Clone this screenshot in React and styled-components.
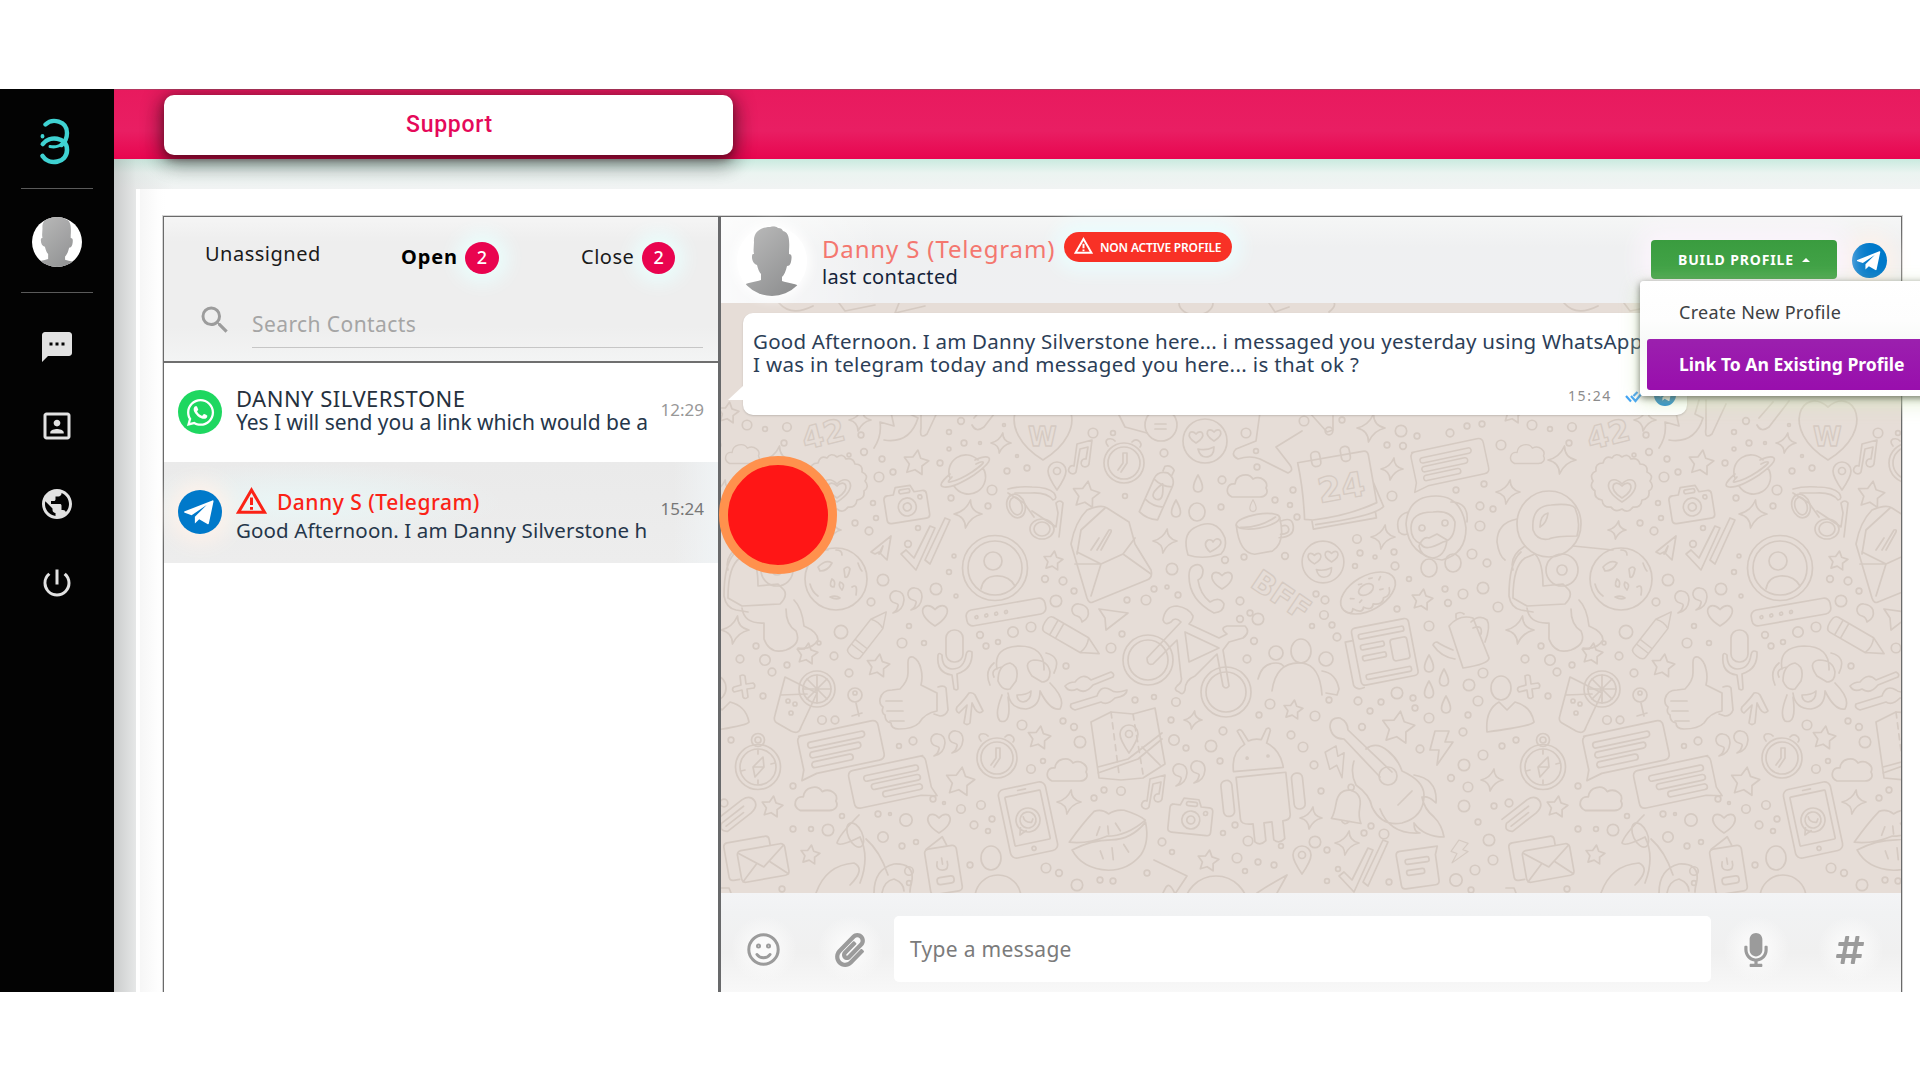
import React from "react";
import styled, { createGlobalStyle, css } from "styled-components";
import { MdSms, MdPortrait, MdPublic, MdPowerSettingsNew, MdSearch } from "react-icons/md";
import { FaWhatsapp, FaPaperclip, FaMicrophone, FaHashtag } from "react-icons/fa";

const Global = createGlobalStyle`
  * { box-sizing: border-box; }
  body { margin: 0; background: #fff; overflow: hidden; }
`;

const Page = styled.div`
  width: 1920px; height: 1080px; padding-top: 89px; overflow: hidden; background: #fff;
  font-family: "Noto Sans", "DejaVu Sans", sans-serif; color: #1f2d3d;
`;
const Frame = styled.div`display: flex; height: 903px; overflow: hidden;`;

/* Sidebar */
const Sidebar = styled.nav`
  width: 114px; flex: none; background: #030303; display: flex; flex-direction: column; align-items: center;
  color: #e2e2e2; padding-top: 28px; position: relative; z-index: 3;
`;
const LogoSlot = styled.div`height: 50px; width: 34px; margin-right: 5px; margin-bottom: 21px; svg { display: block; }`;
const Rule = styled.div`width: 72px; height: 1px; background: #5a5a5a; flex: none;`;
const SideAvatar = styled.div`margin: 28px 0 25px; width: 50px; height: 50px; border-radius: 50%; overflow: hidden; background: #fff; svg { display: block; }`;
const SideNav = styled.div`
  padding-top: 36px; display: flex; flex-direction: column; gap: 42.5px;
  svg { display: block; width: 36px; height: 36px; }
`;

/* Main */
const Main = styled.div`flex: 1; min-width: 0; display: flex; flex-direction: column;`;
const TopBar = styled.header`
  height: 70px; flex: none; padding: 6px 0 0 50px; position: relative; z-index: 2;
  background: linear-gradient(#e81a5e 0, #e91e63 60%, #e8054f 100%);
  box-shadow: inset 0 1px 0 rgba(120,90,100,.45);
`;
const TopTab = styled.div`
  width: 569px; height: 60px; border-radius: 10px; background: #fff; color: #e5095a; padding-left: 2px;
  font: 500 23px/59px Roboto, "Liberation Sans", sans-serif; letter-spacing: .72px; text-align: center;
  box-shadow: 0 4px 7px rgba(70,0,15,.4), 0 4px 20px 3px rgba(20,10,15,.48), 0 12px 20px rgba(30,30,30,.16);
`;
const Content = styled.div`
  flex: 1; min-height: 0; padding: 30px 0 0 22px;
  background: linear-gradient(90deg, rgba(150,150,150,.42) 0, rgba(190,190,190,.22) 22px, rgba(200,200,200,0) 60px),
    linear-gradient(#c9eadf 0, #ebf4f1 14px, #f1f3f3 30px);
`;
const Panel = styled.div`
  height: 100%; padding: 27px 18px 0 27px;
  background: linear-gradient(90deg, #fff 0, #fff 4px, #f6f6f6 4px, #fefefe 22px, #fff 30px);
`;
const Workspace = styled.div`
  height: 100%; display: flex; position: relative;
  border: 1px solid #6a6a6a; border-bottom: 0; box-shadow: 0 0 0 1px rgba(120,120,120,.3);
`;

/* Contacts */
const Contacts = styled.section`width: 557px; flex: none; border-right: 3px solid #68696b; background: #fff;`;
const ContactsHead = styled.div`
  height: 146px; border-bottom: 2px solid #6f6f6f; padding-top: 10px;
  background: linear-gradient(#f5f5f5 0, #eeeeee 25px, #eeeeee 110px, #f3f4f4 100%);
`;
const Tabs = styled.div`height: 62px; padding-left: 41px; display: grid; grid-template-columns: 196px 180px auto; align-items: center;`;
const Tab = styled.div`
  display: flex; align-items: center; gap: ${p => p.$gap || 7}px; color: ${p => (p.$active ? "#000" : "#1a1a1a")};
  font-size: 20px; line-height: 28px; font-weight: ${p => (p.$active ? 700 : 400)};
  letter-spacing: ${p => (p.$active ? ".9px" : ".5px")};
  margin-bottom: ${p => (p.$raised ? "9px" : "0")};
`;
const TabText = styled.span`margin-top: -3px; position: relative; z-index: 1;`;
const Count = styled.span`
  width: ${p => p.$w || 34}px; height: 32px; border-radius: 50%; background: #e9044f; color: #fff; text-align: center;
  font: 500 18px/31px "Noto Sans", sans-serif; letter-spacing: 0;
  box-shadow: 0 0 20px 8px #eafffe;
`;
const Search = styled.div`display: flex; padding: 8px 15px 0 33px; color: #9c9c9c; gap: 19px; svg { flex: none; width: 36px; height: 36px; margin-top: 5px; }`;
const SearchField = styled.div`flex: 1; height: 51px; border-bottom: 1px solid #c6c6c6; font-size: 21px; line-height: 54px; letter-spacing: .42px; color: #a5a5a5;`;

const selectedFill = css`
  background: linear-gradient(90deg, rgba(240,244,246,0) 92%, rgba(240,244,246,.9)),
    radial-gradient(ellipse 200px 40px at 140px 40%, #e9f6f6, rgba(235,235,235,0)), linear-gradient(#eaeaea, #ededed);
`;
const Row = styled.div`
  height: ${p => p.$h}px; display: flex; padding: ${p => p.$pt}px 14px 0 14px;
  ${p => p.$selected && selectedFill}
`;
const Channel = styled.div`
  width: ${p => p.$s}px; height: ${p => p.$s}px; border-radius: 50%; background: ${p => p.$c}; color: #fff; flex: none;
  display: flex; align-items: center; justify-content: center; margin-top: ${p => p.$mt || 0}px;
  box-shadow: ${p => (p.$glow ? "0 0 22px 8px #fff2ea" : "none")};
  svg { display: block; }
`;
const RowBody = styled.div`width: 412px; margin-left: 14px; overflow: hidden; white-space: nowrap; color: #25364a; position: relative;`;
const RowName = styled.div`
  font-size: ${p => (p.$alert ? 21 : 22)}px; line-height: 24px; height: ${p => (p.$alert ? 31 : 24)}px; letter-spacing: .5px;
  font-weight: ${p => (p.$alert ? 500 : 400)}; color: ${p => (p.$alert ? "#fb2216" : "#25303d")};
  display: flex; gap: 10px;
  svg { display: block; flex: none; }
`;
const NameText = styled.span`margin-top: 3px;`;
const RowText = styled.div`font-size: ${p => p.$fs || 21}px; line-height: 24px; letter-spacing: ${p => p.$ls || 0}px;`;
const RowTime = styled.div`font-size: 17px; line-height: 24px; margin: ${p => p.$mt}px 0 0 auto; color: ${p => (p.$dark ? "#777" : "#989898")};`;

/* Conversation */
const Chat = styled.section`flex: 1; min-width: 0; display: flex; flex-direction: column;`;
const ChatHead = styled.div`
  height: 86px; flex: none; display: flex; padding: 9px 14px 0 16px; position: relative; z-index: 2;
  background: linear-gradient(90deg, rgba(255,255,255,.7), rgba(240,243,244,0) 160px), linear-gradient(#f5f6f6, #eff0f1 30px, #eff0f2);
`;
const HeadAvatar = styled.div`width: 70px; height: 70px; border-radius: 50%; overflow: hidden; background: #fff; box-shadow: 0 0 12px 3px #fff; svg { display: block; }`;
const Who = styled.div`margin-left: 15px; padding-top: 6px; flex: 1;`;
const WhoTop = styled.div`display: flex; height: 33px; align-items: flex-start;`;
const WhoName = styled.div`width: 242px; font-size: 24px; line-height: 33px; letter-spacing: .85px; color: #f4776f; white-space: nowrap; position: relative; z-index: 1;`;
const WhoSub = styled.div`font-size: 20px; line-height: 23px; letter-spacing: .35px; color: #14233a;`;
const Flag = styled.div`
  width: 168px; height: 30px; border-radius: 15px; background: #f83126; color: #fff; display: flex; align-items: center; gap: 7px;
  padding-left: 10px; font-size: 12px; font-weight: 600; letter-spacing: -.17px; white-space: nowrap;
  box-shadow: 0 0 18px 9px #ebfdfe; svg { flex: none; margin-top: -3px; }
`;
const BuildWrap = styled.div`position: relative; margin-top: 14px; margin-right: 15px; height: 39px;`;
const BuildButton = styled.div`
  width: 186px; height: 39px; border-radius: 4px; background: linear-gradient(#3a9c3f, #45a54a); color: #fff;
  font-size: 14px; font-weight: 700; letter-spacing: .85px; line-height: 38px; padding-left: 27px; white-space: nowrap;
  display: flex; align-items: center; gap: 8px; box-shadow: 0 0 24px 9px #fdf5fd;
`;
const Caret = styled.i`width: 0; height: 0; border: 4.5px solid transparent; border-top: 0; border-bottom: 4.5px solid #fff;`;
const Menu = styled.div`
  position: absolute; left: -11px; top: 41px; width: 320px; height: 115px; padding: 4px 7px 5px; border-radius: 4px; z-index: 1;
  background: linear-gradient(#fff 0, #fdfdfd 40px, #f7f9f7 62px, #fff 100%); box-shadow: 0 2px 7px rgba(0,0,0,.5), 0 6px 20px rgba(215,235,190,.75);
`;
const MenuItem = styled.div`
  padding-left: 32px; border-radius: 3px; white-space: nowrap;
  ${p => p.$hot ? css`
    height: 51px; line-height: 50px; font-size: 17.6px; font-weight: 700; letter-spacing: -.02px; color: #fff; background: linear-gradient(#9b20ae, #990ead);
  ` : css`
    height: 54px; line-height: 54px; font-size: 18px; letter-spacing: .3px; color: #3c4043;
  `}
`;
const Canvas = styled.div`flex: 1; min-height: 0; display: grid; background: #e6ddd7; overflow: hidden; > * { grid-area: 1 / 1; }`;
const Thread = styled.div`padding: 10px 0 0 22px; z-index: 1;`;
const Bubble = styled.div`
  width: 944px; height: 102px; background: #fff; border-radius: 10px; padding: 17px 11px 0 10px; position: relative;
  box-shadow: 0 1px 2px rgba(0,0,0,.16); color: #2c3e57;
  &::before { content: ""; position: absolute; left: -15px; top: 72px; width: 16px; height: 15px; background: #fff; clip-path: polygon(100% 0, 100% 100%, 0 100%); }
`;
const Line = styled.div`font-size: 20.5px; line-height: 23px; white-space: nowrap; letter-spacing: ${p => p.$ls}px;`;
const Meta = styled.div`display: flex; align-items: center; justify-content: flex-end; margin-top: 8px; height: 22px;`;
const MetaTime = styled.span`font-size: 14px; letter-spacing: 1.65px; color: #8c8c8c; margin-right: 13px;`;
const Ticks = styled.span`margin-right: 11px; margin-top: 3px; svg { display: block; }`;

const Composer = styled.div`
  height: 99px; flex: none; display: flex; align-items: center; padding: 12px 0 0; color: #9b9b9b; position: relative;
  background: linear-gradient(#f3f4f6 0, #f1f2f3 20px, #f0f0f0 60px, #f8f8f8 100%);
`;
const Tool = styled.div`
  width: ${p => p.$w}px; height: 66px; display: flex; align-items: center; justify-content: center; padding: 2px 2px 0 0;
  background: radial-gradient(circle closest-side, #fafafa 30%, rgba(245,245,245,0)); svg { display: block; }
`;
const Input = styled.div`width: 817px; height: 66px; background: #fff; border-radius: 5px; padding-left: 16px; font-size: 21px; line-height: 66px; letter-spacing: .3px; color: #7b7b7b;`;
const Hotspot = styled.div`
  position: absolute; left: 555px; top: 239px; width: 118px; height: 118px; border-radius: 50%; z-index: 1;
  background: #ff1616; border: 9px solid #ff914d;
`;

const Logo = () => (
  <svg width="34" height="50" viewBox="0 0 34 50" fill="none" stroke="#3fd2d2" strokeLinecap="round">
    <path d="M7.5 7.500C14 1 29 3.500 29 16c0 6-2 9-5.500 12" strokeWidth="4.400" />
    <path d="M4.800 27C11 18.500 29 19.500 29 33c0 13-18 16-24.500 6" strokeWidth="4.600" />
    <path d="M12 29.500c5 1 10-.5 13-3.500" strokeWidth="3" /><path d="M4.500 19v.5" strokeWidth="3.800" />
  </svg>
);
const Person = ({ size, zoom }) => (
  <svg width={size} height={size} viewBox={zoom ? "4 2 62 62" : "0 0 70 70"}>
    <defs><linearGradient id="sil" x1="0" y1="0" x2=".7" y2="1"><stop offset="0" stopColor="#bcbcbc" /><stop offset="1" stopColor="#8f9091" /></linearGradient></defs>
    <path fill="url(#sil)" d="M17 16C16 6 24 1 33 1c3-1 6-1 8 1 3 0 4 1 5 3 5 1 7 6 6 20v3c3 0 3 3 2 8-1 3-2 4-4 4-1 5-3 9-5 11v4c6 2 12 2 17 5-6 8-15 13-27 13S13 67 7 59c5-3 11-3 17-5v-6c-2-2-3-5-4-9-3-1-5-4-5-8 0-2 0-3 2-3-1-4 0-8 0-12z" />
  </svg>
);
const Plane = ({ size }) => (
  <svg width={size} height={size} viewBox="0 0 43 43" fill="#fff">
    <path d="M33.600 10.200 6.600 20.800c-.9.400-.8 1.200 0 1.500l6.700 2.300L28 14.700 16.500 26.200v6.500l4.200-4 8 4.500c.8.400 1.300.1 1.500-.7l4.500-21.200c.2-.9-.3-1.400-1.100-1.100z" />
  </svg>
);
const Alert = ({ w, h, c, s }) => (
  <svg width={w} height={h} viewBox="0 0 31 27" fill="none" stroke={c} strokeWidth={s} strokeLinejoin="miter">
    <path d="M15.500 3 28.500 25.300h-26z" /><path d="M15.500 10.500v7.500M15.500 20v2.800" />
  </svg>
);
const Smile = () => (
  <svg width="33" height="33" viewBox="0 0 33 33" fill="none" stroke="#9b9b9b" strokeWidth="3" strokeLinecap="round">
    <circle cx="16.500" cy="16.500" r="14.700" /><path d="M10 21.500c3 4.300 10 4.300 13 0" />
    <circle cx="11.500" cy="13" r="1" /><circle cx="21.500" cy="13" r="1" />
  </svg>
);

/* Wallpaper doodles. Coordinates run from 722 to 1507 across one repeat. */
const REPEAT = 785;
const starPath = (x, y, r) => {
  let d = "";
  for (let i = 0; i < 10; i++) {
    const a = -Math.PI / 2 + 0.15 + (i * Math.PI) / 5;
    const q = i % 2 ? r * 0.52 : r;
    d += (i ? "L" : "M") + (x + q * Math.cos(a)).toFixed(1) + " " + (y + q * Math.sin(a)).toFixed(1);
  }
  return d + "Z";
};
const sparkPath = (x, y, r) => {
  const k = r * 0.18;
  return `M${x + k} ${y - r}Q${x + k} ${y - k} ${x + r} ${y}Q${x + k} ${y + k} ${x - k} ${y + r}Q${x - k} ${y + k} ${x - r} ${y}Q${x - k} ${y - k} ${x + k} ${y - r}Z`;
};
const heartPath = (x, y, r) => `M${x} ${y + r}C${x - r * 2} ${y - r * 0.2} ${x - r * 0.9} ${y - r * 1.5} ${x} ${y - r * 0.5}C${x + r * 0.9} ${y - r * 1.5} ${x + r * 2} ${y - r * 0.2} ${x} ${y + r}Z`;
const cloudPath = "M-17 10c-8-4-5-14 3-13 1-10 14-12 18-5 8-4 16 3 13 9 3 5-1 9-6 9z";
const stars = [[917,463,13],[1087,495,14],[1054,561,10],[808,654,11],[879,666,12],[1040,738,12],[961,782,15],[773,807,11],[811,855,10],[1294,710,10],[1209,861,11],[729,413,11],[1423,600,11],[1399,728,17]];
const sparks = [[1002,443,10],[969,514,14],[1166,541,12],[736,630,14],[1194,720,9],[1070,802,12],[861,420,11],[1372,428,14],[1393,469,11],[1384,537,12],[1312,818,11],[1348,843,12],[1493,780,11],[1509,492,12],[778,460,14],[833,530,9]];
const hearts = [[936,615,11],[940,823,10],[1223,580,9]];
const clouds = [[1250,487,1],[1070,771,1],[745,455,.85],[819,800,1.05]];
const dots = [[748,425,5],[766,429,2.5],[788,427,4.5],[785,443,3],[862,435,3],[865,452,3.5],[850,455,2],[883,459,3],[880,477,5],[894,472,3],[941,463,3],[962,421,3.5],[950,432,2.5],[965,443,3],[981,443,1.5],[1005,425,1.5],[950,449,2],[1018,456,1.5],[1008,471,3],[1028,468,3],[993,490,5],[952,498,3],[989,506,3],[874,503,2.5],[919,528,2.5],[856,523,3],[870,531,4],[877,518,2.5],[909,544,3.5],[955,556,2],[950,572,2.5],[884,580,6],[937,589,6],[957,596,2],[872,602,4],[842,632,7],[757,646,3],[835,656,4],[820,643,2],[741,659,4],[766,660,5.5],[788,665,3],[773,672,4],[850,673,4],[910,626,2.5],[903,643,5],[925,643,2.5],[1046,579,3.5],[1064,581,4],[1075,591,3],[1057,601,6],[1014,632,5.5],[1032,627,5],[981,635,3.5],[999,642,2.5],[987,646,3],[1067,666,3],[1112,648,5],[1123,634,3],[1128,600,3],[1147,600,5],[1155,589,3],[1168,587,2],[1179,595,3],[1173,569,6],[1126,496,2.5],[1094,433,5],[1114,433,2.5],[1165,453,4],[1247,433,5],[1257,451,2.5],[1258,467,3],[1223,480,4],[1294,490,3],[1276,500,3],[1291,505,2.5],[1222,507,3],[1298,517,3],[1245,557,3],[1226,560,3.5],[1286,556,3.5],[1241,601,4],[1251,613,3],[1241,619,3.5],[1259,619,6],[1255,641,3.5],[1248,659,4],[1136,700,3],[1155,697,2.5],[1177,702,4.5],[1172,720,3],[1260,715,3],[1271,704,5],[1224,731,4],[1175,740,5.5],[1187,748,3],[1212,746,6],[1221,761,3],[1292,735,4],[1304,747,5],[823,720,4.5],[836,720,4],[764,696,3],[732,740,3],[900,746,2.5],[914,741,4],[1023,725,5],[1064,721,3],[1075,727,3.5],[1081,742,6],[1044,761,2.5],[1032,769,4.5],[1105,790,3],[1122,791,4.5],[1095,798,3],[794,786,3],[725,803,4],[843,816,2.5],[879,814,3],[891,814,1.5],[907,820,6.5],[934,799,3],[945,803,1.5],[962,809,4.5],[982,805,4.5],[975,825,4],[993,819,3],[989,831,2.5],[829,830,6],[884,837,5.5],[903,846,3],[917,842,2.5],[794,829,3],[812,829,2.5],[910,871,4.5],[910,883,2.5],[971,865,3],[1047,868,5],[1060,873,3.5],[1078,885,6],[1101,880,3],[1114,881,3],[1163,842,4],[1173,852,2.5],[1148,873,3],[1236,825,3],[1224,833,2.5],[1249,841,5],[1282,846,2.5],[1238,858,5],[1259,862,3],[1275,865,3],[1246,871,2.5],[783,889,3],[1305,421,5],[1330,431,4],[1343,420,3],[1402,431,6],[1418,436,3],[1388,445,3],[1404,446,3.5],[1451,433,4],[1468,426,3],[1483,424,3],[1502,445,5],[1393,496,5],[1457,490,3],[1485,484,3],[1481,506,4],[1494,509,3],[1481,526,5],[1358,539,4.5],[1361,553,3],[1376,557,2],[1395,552,3],[1396,566,4],[1356,566,2.5],[1473,554,5],[1488,563,4],[1446,589,3],[1464,594,5],[1484,588,6],[1499,607,5],[1449,603,3.5],[1430,626,5],[1398,609,3],[1410,579,2.5],[1317,594,3],[1326,600,4],[1325,615,4.5],[1333,625,3],[1338,637,4],[1313,626,2.5],[1484,673,5],[1470,685,6],[1479,701,5],[1469,715,3],[1464,732,4],[1430,718,5],[1398,693,6],[1414,698,3],[1416,708,3],[1382,702,3],[1359,701,4],[1371,711,3],[1363,727,3.5],[1316,716,5],[1330,700,3],[1421,749,4],[1465,765,6],[1484,755,5],[1503,746,3],[1452,778,3.5],[1469,787,5],[1465,806,6],[1495,806,3],[1479,822,3],[1490,840,6],[1494,860,5],[1476,870,5],[1457,880,6.5],[1390,882,3],[1372,826,3],[1365,833,3],[1385,834,5],[1316,842,6],[1328,850,3],[1339,869,2.5],[1328,881,2.5],[1322,791,3],[1315,765,4],[1472,890,3]];
const G = ({ x, y, r = 0, s = 1, children }) => <g transform={`translate(${x} ${y}) rotate(${r}) scale(${s})`}>{children}</g>;
const C = ({ x = 0, y = 0, r }) => <circle cx={x} cy={y} r={r} />;
const P = ({ d }) => <path d={d} />;
const Box = ({ x, y, w, h, r = 4 }) => <rect x={x} y={y} width={w} height={h} rx={r} />;

const Camera = () => <><P d="M-20-12h8l3-7h15l3 7h8q4 0 4 4v20q0 4-4 4h-35q-4 0-4-4v-20q0-4 4-4z" /><C y={2} r={9} /><C y={2} r={4} /><C x={14} y={-6} r={2} /><Box x={-6} y={-16} w={11} h={4} r={2} /></>;
const Clock = () => <><C r={20} /><C r={16} /><P d="M-1-10v10l-5 7M3-10v10l-6 9M-1-10h4M-16-17q-4-5 0-7 5-1 7 2M8-21q4-4 8 0 2 3 0 5" /></>;
const Bubbles = () => <><P d="M-38-20h74q6 0 6 6v28q0 6-6 6h-64l-16 4 4-10v-28q0-6 6-6z" /><Box x={-31} y={-12} w={58} h={6} r={3} /><Box x={-31} y={-2} w={52} h={6} r={3} /><Box x={-31} y={8} w={42} h={6} r={3} /></>;
const Face = () => <><C r={22} /><P d={heartPath(-9, -4, 6)} /><P d={heartPath(9, -6, 6)} /><P d="M-7 8q8 2 16-2 0 10-8 10-6 0-8-8z" /></>;
const Quotes = () => <><P d="M-8-9a6 6 0 1 0-2 12q4 1 3 3-1 5-5 7 10-2 11-13 0-8-7-9z" /><P d="M10-12a6 6 0 1 0-2 12q4 1 3 3-1 5-5 7 10-2 11-13 0-8-7-9z" /></>;
const Pencil = () => <><P d="M-28-9q-5 0-5 9 0 9 5 9h43l18-9-18-9zM-22-9v18M-15-9v18M15-9q4 9 0 18" /></>;
const Ticked = () => <><P d="M-24 4l5-4 8 8 16-32 5 2-19 42zM0 10l20-42 5 2-20 44z" /></>;
const Bolt = () => <P d="M-6-16h14l-4 11h8l-16 23 2-15h-9z" />;
const Note = () => <P d="M-6 12a4 4 0 1 1-2-6l3-22 15-4-3 24a4 4 0 1 1-3-5l2-12-8 2z" />;
const Pin = () => <><P d="M0 14q-9-13-9-19a9 9 0 0 1 18 0q0 6-9 19z" /><C y={-5} r={3.5} /></>;
const Drop = () => <P d="M0-9q-9 16 0 17 9-1 0-17z" />;
const Envelope = () => <><Box x={-24} y={-15} w={48} h={32} /><P d="M-23-13l23 18 23-18M-23 16l16-15M23 16l-16-15M-26 13h-6q-4 0-4-4v-30q0-4 4-4h38q4 0 4 4v5" /></>;
const Word = styled.text`font: 700 ${p => p.$s}px "DejaVu Sans", sans-serif; stroke-width: 1.3px;`;

const Doodles = () => (
  <>
    {stars.map((s, i) => <P key={"s" + i} d={starPath(...s)} />)}
    {sparks.map((s, i) => <P key={"k" + i} d={sparkPath(...s)} />)}
    {hearts.map((s, i) => <P key={"h" + i} d={heartPath(...s)} />)}
    {clouds.map((c, i) => <G key={"c" + i} x={c[0]} y={c[1]} s={c[2]}><P d={cloudPath} /></G>)}
    {dots.map((c, i) => <C key={"d" + i} x={c[0]} y={c[1]} r={c[2] * 0.95} />)}
    <G x={1044} y={437}><P d="M0 23C-50-8-25-52 0-30 25-52 50-8 0 23Z" /></G>
    <G x={967} y={472}><P d="M-16 6a17 17 0 0 1 28-18M17-4a17 17 0 0 1-29 18M-16 2q-14 12-6 13 10 1 30-12 18-13 15-17-3-3-14 2" /><P d="M-14 5q-6 6-2 5 10-2 22-10 13-9 11-10-1-1-7 2" /></G>
    <G x={908} y={505} r={-9}><Camera /></G><G x={1192} y={818} r={6}><Camera /></G>
    <G x={1035} y={513}><P d="M-26-24q10-3 24-2 16 0 22 6 4 6-1 7-6-8-22-7l-16 0M22-10q4-4 7 0l-4 34M22-10l2 10-2 14-24-16M-26-20l16 10 10 14" /><ellipse cx="-18" cy="-7" rx="9" ry="12" transform="rotate(-18 -18 -7)" /><ellipse cx="-18" cy="-7" rx="6" ry="9" transform="rotate(-18 -18 -7)" /><ellipse cx="8" cy="16" rx="12" ry="10" /><ellipse cx="8" cy="16" rx="8" ry="7" /></G>
    <G x={1125} y={463}><Clock /></G><G x={998} y={758}><Clock /></G>
    <G x={1206} y={441}><Face /></G><G x={1324} y={562} s={.95}><Face /></G>
    <G x={1160} y={492} r={24}><P d="M-10 26v-36q0-9 10-11 10 2 10 11v36q-10 4-20 0zM-10-10q10 4 20 0M-10 12q10 4 20 0M-5-21v-5q5-4 10 0v5" /><Drop /></G>
    <G x={1199} y={484}><Drop /></G><G x={1177} y={509}><Drop /></G><G x={1254} y={506} s={.7}><Drop /></G><ellipse cx={1198} cy={512} rx={8} ry={9} />
    <G x={1207} y={540}><P d="M-18 15q-6-20 6-27 22-12 31 10 2 10-4 16-18 6-33 1zM4 12q-8-8-2-12 4-1 5 2 3-5 7-2 4 5-10 12z" /></G>
    <G x={1261} y={533} r={-10}><ellipse cx="0" cy="-12" rx="22" ry="7" /><P d="M-22-12q-2 28 13 32h18q15-6 13-32M-18-9q18 4 36-4M22-8q12-3 12 6 0 12-16 10M23-3q6-1 6 4 0 5-9 4" /></G>
    <G x={926} y={550}><Ticked /></G><G x={1364} y={872}><Ticked /></G>
    <G x={884} y={548}><P d="M-12 4l20-16-4 24-8-8-4 2zM-4 6l4-8-2 6" /></G>
    <G x={996} y={568}><C r={32.5} /><C r={27} /><C x={-2} y={-7} r={9} /><P d="M-14 21q2-12 14-13 14-1 20 10" /></G>
    <G x={1112} y={552}><P d="M-40-8Q-36-30-24-42q14-6 20-2l22 14 6 22 16 26q2 8-4 10l-54 22q-4 2-6-4z" /><P d="M-34 2l4-24 24-22M-36 12l26 0 22-10 28 20M-10 12l-10 32M-34 0l24 12M24-14l-12 16M-14-2l12-20q3-1 2 2l-10 18M-20-2l8-12" /></G>
    <G x={837} y={579}><C r={31} /><P d="M-18-12q8-8 14-4-4 8-12 8zM8-10q4-4 6 0-2 10-5 8zM-26 5q2 8 8 12M16 8q6-4 4 8M-4 0q4 2 2 8-6 0-2-8zM4 3q6 2 2 8-4-4-2-8zM-6 18q6-2 10 1-4 2-10-1zM0-29q6 0 6 5M22-16q2 6 4 8" /></G>
    <G x={838} y={488}><P d="M0-31q6-4 9 2 7-2 9 5 8 0 7 8 7 3 3 9 5 6-1 10 1 8-7 9-1 8-9 7-5 7-11 2-7 4-11-2-8 1-9-7-8-1-7-9-6-4-2-10-4-7 3-10-1-8 7-8 2-8 9-5 4-6 10-1z" /><P d={heartPath(0, 2, 12)} /><P d={heartPath(0, 2, 8)} /></G>
    <G x={765} y={524}><ellipse rx="32" ry="33" /><P d="M-16 6q-2-24 18-25 20-2 24 3 6 14 2 28-22 0-28 3-12 2-16-9zM-9 3q0-12 8-14-1 10-8 14M-32-5q-20 4-20 23 2 14 8 18M-24 22q-16 10-12 24M24 22l40 4M-28 28q-12 10-12 44 2 12 12 14l12 2M-24 34q-12 8-12 40l14 8 38-2q8-8 4-14l-6-6-20 2q0-24-8-32z" /><C x={13} y={46} r={16} /><C x={13} y={46} r={5} /><P d="M-22 84q2 16 22 15v16q6 16 22 11 16-6 10-19-10-6-10-22M30 76q8 8 10 26 14 6 14 14-6 10-20 8" /></G>
    <G x={906} y={600}><Quotes /></G><G x={947} y={743}><Quotes /></G><G x={1189} y={773}><Quotes /></G><G x={1081} y={612}><P d="M-1-8a6 6 0 1 0-2 12q4 1 5 6 8-4 6-12-2-5-9-6z" /></G>
    <G x={1007} y={612} r={-10}><Box x={-40} y={-8} w={80} h={16} r={6} /><C x={-30} r={1.5} /><C x={-20} r={1.5} /><C x={-10} r={1.5} /><C r={1.5} /></G>
    <G x={870} y={634} r={-52} s={.85}><Pencil /></G><G x={1073} y={638} r={30} s={.95}><Pencil /></G>
    <G x={957} y={655}><Box x={-10} y={-25} w={17} h={32} r={8} /><P d="M-18 0q-2 18 14 20l2 14q4 2 4-1l-1-14q16-5 15-22-5-3-6 3-2 14-14 14-10-1-10-14-3-3-4 0z" /></G>
    <G x={1114} y={617}><P d="M-14-8l29 4-22 17-1-12z" /></G>
    <G x={1206} y={588}><P d="M-12-22q8-4 10 4 0 8-5 10 2 14 12 22 10-6 14 2 0 8-10 9Q-16 12-16-12q0-8 4-10z" /></G>
    <G x={1188} y={670}><C x={-39} y={-10} r={25} /><C x={-39} y={-10} r={20} /><C x={39} y={22} r={25} /><C x={39} y={22} r={20} /><P d="M-40-12l34-36q-6-6-10 0-6 4-8-2 2-14 14-14 12 2 16 10 0 4-4 8l30 14 8-4q-8-6 0-8h18q6 6-2 12l-14 4-6 8 6 36q-3 4-6 0l-6-32-22 22q-10 4-10 14-2 6-6 2-6-2-2-6 6-4 4-10l-4-36-24 24q-6 2-6-6zM-2-38l4 30 30-14z" /></G>
    <G x={1025} y={677}><P d="M-27-8q-4-22 22-23 26 0 25 24M-30-14q-10 8-4 22M22-24q16 4 8 20M-30 0q-4-8 8-10M-8 4q4-14-6-18-12 2-12 18 4 10 12 8zM8-1q-10-14 2-16 14 0 16 12 0 10-8 10zM-22 18q-8 20-2 26 12 4 8-24M16 14q10 20 20 18 6-10-10-26M-16 16q2 16 18 16 14-2 14-18M-7 18q10 0 14-4 0 10-8 11-6-1-6-7z" /></G>
    <G x={802} y={700}><P d="M-16-23l32 16-16 34q-2 8-10 4l-14-8q-4-2-2-8zM-20-5l26-1" /><C x={16} y={-11} r={18} /><C x={16} y={-11} r={14} /><P d="M16-25v28M2-11h28M6-21l20 20M26-21l-20 20" /><C x={-13} y={1} r={2} /><C x={-6} y={4} r={2} /><C x={-10} y={13} r={2} /></G>
    <G x={856} y={697}><C y={-2} r={7} /><C y={-4} r={2} /><P d="M1 6l3 13M-3 19l10-3" /></G>
    <G x={913} y={697}><P d="M-20-7l8-1q8-8 8-16v-11q0-6 5-5 6 3 8 12 2 8 0 16 8 4 16 8v18q-12 2-18 12-6 6-20 6-8 0-8-6-6-1-6-8-4-2-2-8-4-3-3-8 2-9 12-9zM26-10q6-2 8 1l2 22q-2 6-8 6l-6-2M-26 4h16M-25 14h16M-22 24h14" /></G>
    <G x={970} y={707}><P d="M-12 0q8-8 12-14 4-1 6 2l8 16q-4 4-8-2l-3-6-2 20q-3 3-6 0l3-18-8 8q-4-2-2-6z" /></G>
    <G x={1098} y={686}><P d="M-32 0q4-4 10-4 8-10 16-2l20-8q4 2 2 5l-20 8q-8 10-16 4-8 4-12-3zM-26 18l26-8q4-12 14-6 4 4 16 0 0 6-12 8-8 8-14 4l-26 8q-6-2-4-6z" /></G>
    <G x={1129} y={745}><P d="M-37-23l20-10 22 2 22-6 10 56-22 14-22 2-22-2zM-30 22l30-8 34-26M-30 28l40-14 24-20M14 2l18 18" /><path d="M-17-33l8 62M5-31l10 60" strokeDasharray="6 5" /><g transform="translate(1 -6)"><Pin /></g></G>
    <G x={841} y={748} r={-12}><Bubbles /></G><G x={892} y={782} r={-12} s={.96}><g transform="scale(-1 1)"><Bubbles /></g></G><G x={1450} y={463} r={-12} s={.9}><Bubbles /></G>
    <G x={759} y={767}><C r={22.5} /><C r={18} /><C y={-27} r={6.5} /><C y={-27} r={3} /><P d="M5-10L-5 0l2 10L6 0zM-5 0l11 0M0-17v4M0 17v-4M-17 4l4-1M17-4l-4 1" /></G>
    <G x={1261} y={785} r={-6}><P d="M-25-16q0-20 14-26l-6-14q3-3 5 1l5 10q6-2 13 0l6-10q4-2 4 2l-5 12q13 8 14 26zM-23-10h50v42q0 6-8 6v18q-6 5-11 0v-18h-8v18q-6 5-11 0v-18q-12 0-12-6z" /><Box x={-39} y={-8} w={11} h={36} r={5} /><Box x={32} y={-8} w={11} h={36} r={5} /><C x={-10} y={-28} r={1} /><C x={11} y={-28} r={1} /></G>
    <G x={1029} y={820} r={-12}><Box x={-24} y={-35} w={48} h={70} r={6} /><Box x={-18} y={-27} w={36} h={50} r={1} /><C r={12} /><C r={8} /><C y={29} r={2} /><P d="M-4-31h8M-4-4q0 6 7 7l2-3M-9 6l-2 7 7-3" /></G>
    <G x={1110} y={838} r={-6}><P d="M-40 0q16-18 28-28 8-2 14 4 8-4 16-2 14 6 20 12-20 14-40 12-20 6-38 2zM-38 8q20-8 40-6 20 2 36-14 2 20-8 32-14 14-34 12-26-4-34-24zM-12-4l4-8M0-4v-8M12-6l-4-8M-10 12l2 8M2 10v12M14 8l4 8" /></G>
    <G x={764} y={862} r={-10}><Envelope /></G>
    <G x={861} y={857}><P d="M0-20q-20 10-23 6 2-8 22-28M0-20q10 20 0 46M6-18q14 12 22 36M-44 36q10-28 38-30 12 6-4 22M14 36q0-24 20-29 20-1 18 16-2 8-2 12M22 36q2-12 12-14 10 4 10 12" /><ellipse cx="5" cy="-22" rx="7" ry="13" transform="rotate(-25)" /></G>
    <G x={944} y={867} r={-9}><Box x={-16} y={-20} w={32} h={46} /><P d="M-14-20l18-10 3 9" /><P d="M-5-6q-3 8 4 9 7 1 6-8M0-9v6" /><Box x={-8} y={10} w={17} h={7} r={3} /></G>
    <ellipse cx={992} cy={858} rx={10} ry={12} />
    <G x={735} y={820} r={-38}><P d="M16-5h-28q-7 5 0 10h30q10-1 10-8t-9-8h-32M12 0h-22" /></G>
    <C x={999} y={898} r={23} /><C x={1217} y={908} r={32} />
    <P d="M1155 860l33 16-12 18q-6-14-10-5l-4 8M1258 893q12-8 30-18l-10 18M722 888l8 0 2 5" />
    <G x={1303} y={860}><Pin /></G><G x={1058} y={476}><Pin /></G>
    <G x={1083} y={460}><Note /></G><G x={1156} y={795}><Note /></G>
    <G x={1297} y={673}><C x={-20} y={-20} r={7} /><ellipse cx="5" cy="-22" rx="10" ry="12" /><C x={30} y={-14} r={7} /><P d="M-24 18q4-30 30-28 18 2 20 32M-38 6q4-16 18-16 6 0 8 4M26-2q14 2 17 18l-2 6-11-2" /></G>
    <G x={1340} y={490} r={-10}><P d="M-36-34h66q5 0 5 5v48q-30 8-66 6l-8-2q4-30 3-57zM35-2l6 26q-10 8-70 6" /><Box x={-22} y={-42} w={9} h={15} /><Box x={8} y={-42} w={9} h={15} /><P d="M-32 26v8h64v-6" /></G>
    <G x={1434} y={532}><P d="M-27-8q2-28 30-28 26 0 30 32 0 26-24 32-34-4-36-36zM-25-20q-14 4-9 20 4 4 8 2M18-30q18 0 16 20M-22-4q0-16 22-16 18-2 22 10 0 18-12 20-18 10-22 2-10-4-10-16zM-14 14q4-10 10-8l8-4 10 6q-2 18-16 18-10-2-12-12z" /><C x={-11} y={-4} r={3} /><C x={12} y={-9} r={3} /><ellipse cx="-4" cy="36" rx="8" ry="9" /><ellipse cx="20" cy="31" rx="8" ry="9" /></G>
    <G x={1369} y={593} r={-30}><ellipse rx="30" ry="17" /><ellipse cy="-4" rx="8" ry="5" /><P d="M-29 4q4 8 8 2 6 10 10 4 6 8 10 2 8 6 12 0 8 2 10-6M-18-4l3 2M16-6l3-2M12 3l3 1M-12 4l3-1M-4-12l3 1M8-12l3 1" /></G>
    <G x={1385} y={653} r={-11}><Box x={-28} y={-30} w={58} h={58} /><P d="M-28-18h-8v44q2 6 10 4" /><Box x={-22} y={-23} w={46} h={5} r={2} /><Box x={-22} y={-12} w={24} h={5} r={2} /><Box x={-22} y={-1} w={24} h={5} r={2} /><Box x={8} y={-12} w={17} h={22} r={3} /><Box x={-22} y={18} w={46} h={5} r={2} /></G>
    <G x={1470} y={640}><P d="M-20-14q10-12 24-8l16 40q0 6-26 10zM-13-22v-4q4-3 8 0M-16 10q-10-4-16-8-3 0-4 3 8 12 22 14M2-18q8-8 16-2 4 6-2 22M4-12q10-4 8 6" /></G>
    <G x={1430} y={664}><Drop /></G><G x={1445} y={678}><Drop /></G><G x={1430} y={690}><Drop /></G><G x={1447} y={705}><Drop /></G>
    <G x={1511} y={710}><ellipse cx="-9" cy="-22" rx="10" ry="12" /><P d="M-23 22q-2-22 12-30l8 8 8-8q16 4 19 20-2 4-47 10z" /></G>
    <G x={1529} y={687}><P d="M-3-11q3-2 5 0l1 8 7-1q3 2 1 5l-7 1 1 8q-3 3-5 0l-1-7-8 2q-3-3 0-5l7-2z" /></G>
    <G x={1389} y={773}><P d="M-58-46q0-10 10-9 8 4 8 12l44 42M-58-46q2 12 14 12l36 38M-34-12q-4 12 2 24 14 10 16 22 10 20 30 16 22-6 22-28 0-14-22-24-4-12-14-20-12-10-22-2M26 2q24 4 22 28-8-8-14-6 2 12 12 20 8 8 10 20-20 0-30-14 0 10 6 10-30 2-40-24M24 18l-14 14" /><C y={3} r={9} /></G>
    <G x={1442} y={747}><Bolt /></G><G x={1338} y={762} r={-30} s={.9}><Bolt /></G><G x={1460} y={852} r={20} s={.7}><Bolt /></G>
    <G x={1349} y={805} r={10}><P d="M-14 16q2-4 2-16 0-14 12-15 12 1 12 15 0 10 4 16zM-4 16q4 6 8 0" /><C y={-18} r={3} /></G>
    <G x={1419} y={867} r={-8}><P d="M-20-14q0-4 4-4h38l-3 8v26q0 4-4 4h-30q-4 0-4-4z" /><Box x={-12} y={-9} w={24} h={5} r={2} /><Box x={-12} y={2} w={18} h={5} r={2} /></G>
    <P d="M875 448q8-12 6-26l14 4-4-18M885 440q26 4 34-22l-8-4 4-14M922 400v28q-2 12 6 6l14-30M973 425q4 8 12 2l20-26M975 418l14-16M1120 415l6 12 22 6M1262 405l-5 36-20 8q-6 6 2 10 12-4 22 0l28 14q6-2 2-8l-14-18 26-16M1310 412l18 20 6-2v-14" />
    <C x={1162} y={425} r={16} /><P d="M1156 424h11M1156 429h11M780 303q12 14 34 3M840 303l6 8 30-6M1180 303a17 12 0 0 0 34 0M1270 303l6 9 14-5M900 303l-4 10 30-7M1330 312q10-8 2-12" />
  </>
);
const WallSvg = styled.svg`display: block; fill: none; stroke: #d5cac2; stroke-width: 1.7; stroke-linejoin: round; stroke-linecap: round;`;
const Wallpaper = () => (
  <WallSvg width="1180" height="590" viewBox="722 303 1180 590">
    <g id="doodles"><Doodles /></g>
    <use href="#doodles" x={REPEAT} /><use href="#doodles" x={-REPEAT} />
    <G x={1321} y={503} r={-10}><Word $s={34}>24</Word></G>
    <G x={1250} y={586} r={34}><Word $s={30}>BFF</Word></G>
    {[0, REPEAT].map(dx => (
      <g key={dx}>
        <G x={806 + dx} y={450} r={-14}><Word $s={31}>42</Word></G>
        <G x={1029 + dx} y={446}><Word $s={26}>W</Word></G>
      </g>
    ))}
  </WallSvg>
);

export default function App() {
  return (
    <Page>
      <Global />
      <Frame>
        <Sidebar>
          <LogoSlot><Logo /></LogoSlot>
          <Rule />
          <SideAvatar><Person size={50} zoom /></SideAvatar>
          <Rule />
          <SideNav><MdSms /><MdPortrait /><MdPublic /><MdPowerSettingsNew /></SideNav>
        </Sidebar>
        <Main>
          <TopBar><TopTab>Support</TopTab></TopBar>
          <Content>
            <Panel>
              <Workspace>
                <Contacts>
                  <ContactsHead>
                    <Tabs>
                      <Tab $raised>Unassigned</Tab>
                      <Tab $active><TabText>Open</TabText><Count>2</Count></Tab>
                      <Tab $gap={8}><TabText>Close</TabText><Count $w={33}>2</Count></Tab>
                    </Tabs>
                    <Search><MdSearch /><SearchField>Search Contacts</SearchField></Search>
                  </ContactsHead>
                  <Row $h={99} $pt={23}>
                    <Channel $s={44} $c="#1ed760" $mt={4}><FaWhatsapp size={31} /></Channel>
                    <RowBody>
                      <RowName>DANNY SILVERSTONE</RowName>
                      <RowText $ls={-0.03}>Yes I will send you a link which would be a</RowText>
                    </RowBody>
                    <RowTime $mt={12}>12:29</RowTime>
                  </Row>
                  <Row $h={101} $pt={25} $selected>
                    <Channel $s={44} $c="#0079ca" $mt={3} $glow><Plane size={44} /></Channel>
                    <RowBody>
                      <RowName $alert><Alert w={31} h={27} c="#fb2216" s={3} /><NameText>Danny S (Telegram)</NameText></RowName>
                      <RowText $fs={20.5} $ls={0.13}>Good Afternoon. I am Danny Silverstone h</RowText>
                    </RowBody>
                    <RowTime $mt={10} $dark>15:24</RowTime>
                  </Row>
                </Contacts>
                <Chat>
                  <ChatHead>
                    <HeadAvatar><Person size={70} /></HeadAvatar>
                    <Who>
                      <WhoTop>
                        <WhoName>Danny S (Telegram)</WhoName>
                        <Flag><Alert w={19} h={17} c="#fff" s={3.2} />NON ACTIVE PROFILE</Flag>
                      </WhoTop>
                      <WhoSub>last contacted</WhoSub>
                    </Who>
                    <BuildWrap>
                      <BuildButton>BUILD PROFILE <Caret /></BuildButton>
                      <Menu>
                        <MenuItem>Create New Profile</MenuItem>
                        <MenuItem $hot>Link To An Existing Profile</MenuItem>
                      </Menu>
                    </BuildWrap>
                    <Channel $s={35} $c="#0079ca" $mt={17} $glow><Plane size={35} /></Channel>
                  </ChatHead>
                  <Canvas>
                    <Wallpaper />
                    <Thread>
                      <Bubble>
                        <Line $ls={0.22}>Good Afternoon. I am Danny Silverstone here... i messaged you yesterday using WhatsApp</Line>
                        <Line $ls={0.34}>I was in telegram today and messaged you here... is that ok ?</Line>
                        <Meta>
                          <MetaTime>15:24</MetaTime>
                          <Ticks><svg width="18" height="12" viewBox="0 0 18 12" fill="none" stroke="#3aa0f5" strokeWidth="2.2"><path d="M1 5l5 5.5M6 5l4.5 5L17 2M8.5 5l4-4" /></svg></Ticks>
                          <Channel $s={22} $c="#0079ca"><Plane size={22} /></Channel>
                        </Meta>
                      </Bubble>
                    </Thread>
                  </Canvas>
                  <Composer>
                    <Tool $w={86}><Smile /></Tool>
                    <Tool $w={87}><FaPaperclip size={34} /></Tool>
                    <Input>Type a message</Input>
                    <Tool $w={91}><FaMicrophone size={34} /></Tool>
                    <Tool $w={97}><FaHashtag size={32} /></Tool>
                  </Composer>
                </Chat>
                <Hotspot />
              </Workspace>
            </Panel>
          </Content>
        </Main>
      </Frame>
    </Page>
  );
}
